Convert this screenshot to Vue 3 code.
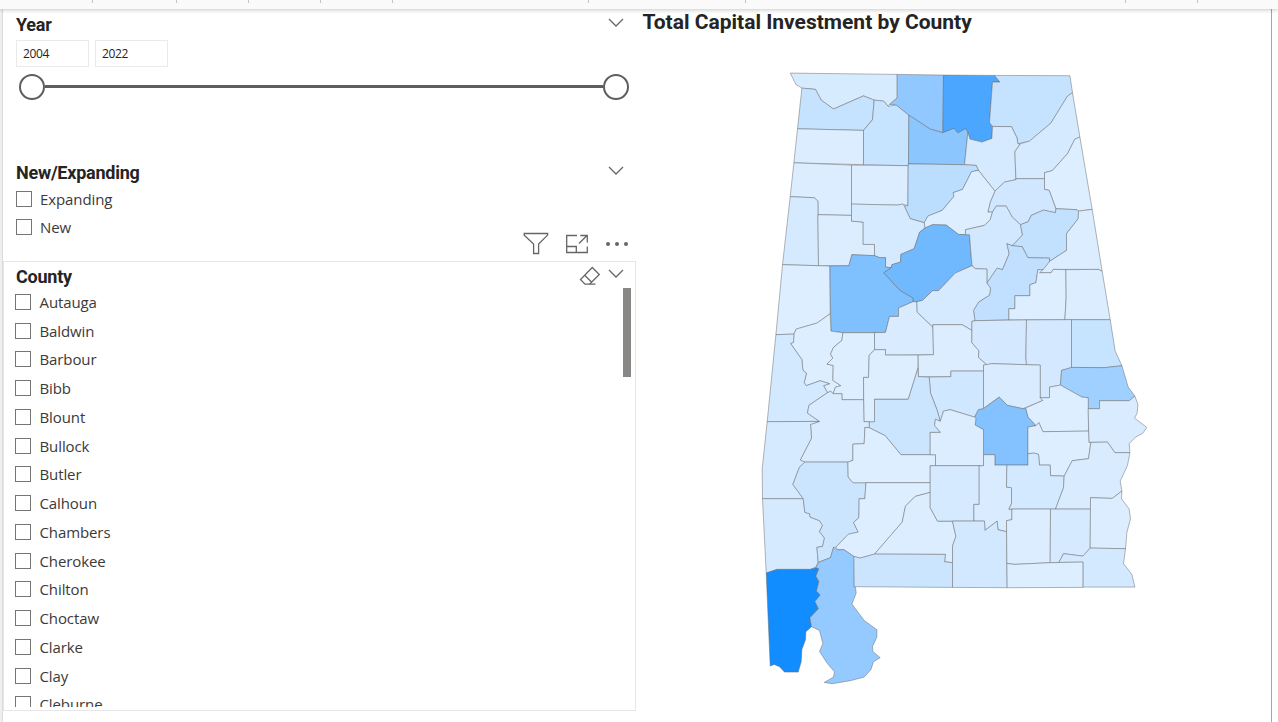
<script setup>
const ticks = [92, 176, 248, 320, 392, 588, 745, 1125, 1197]
const kinds = ['Expanding', 'New']
const names = [
  'Autauga', 'Baldwin', 'Barbour', 'Bibb', 'Blount', 'Bullock', 'Butler', 'Calhoun',
  'Chambers', 'Cherokee', 'Chilton', 'Choctaw', 'Clarke', 'Clay', 'Cleburne',
]
const counties = [
  { n: 'Lauderdale', f: '#d7ebff', p: '790,72.7 897,74 897,97.5 889.5,104 888,106 883.5,100.7 874,99.7 863.3,95.5 833.3,108.6 821,99.7 815.3,89 801.7,87.7 795.7,84' },
  { n: 'Colbert', f: '#c5e2ff', p: '801.7,87.7 815.3,89 821,99.7 833.3,108.6 863.3,95.5 874,99.7 872.3,119.3 863.3,130 797.3,128.4' },
  { n: 'Franklin', f: '#dbedff', p: '797.3,128.4 863.3,130 863.3,164.3 793.7,162.4' },
  { n: 'Lawrence', f: '#c6e3ff', p: '874,99.7 883.5,100.7 888,106 896,104.5 908.7,114.7 908.3,165.3 863.3,164.3 863.3,130 872.3,119.3' },
  { n: 'Limestone', f: '#91c8ff', p: '897,74 943.3,74.7 942.7,132.3 930,128.7 908.7,114.7 896,104.5 889.5,104 897,97.5' },
  { n: 'Madison', f: '#4ba6ff', p: '943.3,74.7 994.3,75 999.7,81.7 992.3,81.7 989.3,122 992.3,126 991.7,138 981.7,141.7 969.7,138.7 967.7,131.7 965,128.3 957.7,132.7 953.7,128 942.7,132.3' },
  { n: 'Jackson', f: '#c5e3ff', p: '994.3,75 1069.7,75.3 1072.3,92.3 1067.3,95.7 1050.7,122.7 1029.3,140.7 1017.7,143.3 1016.7,137.3 1011.3,126.3 992.3,126 989.3,122 992.3,81.7 999.7,81.7' },
  { n: 'Morgan', f: '#8bc6ff', p: '908.7,114.7 930,128.7 942.7,132.3 953.7,128 957.7,132.7 965,128.3 967.7,131.7 964.3,164.3 908.3,163.5' },
  { n: 'Marshall', f: '#d5eaff', p: '967.7,131.7 969.7,138.7 981.7,141.7 991.7,138 992.3,126 1011.3,126.3 1016.7,137.3 1017.7,143.3 1020,143.5 1014.7,151.3 1015.7,179.3 1004.3,181.7 994.7,190.7 978.3,170 976,165 964.3,164.3' },
  { n: 'DeKalb', f: '#d5eaff', p: '1072.3,92.3 1079.7,136.7 1074.7,138.7 1067.3,153.3 1052,170.3 1044.3,172.3 1044.3,178.3 1015.7,178.3 1014.7,151.3 1020,143.5 1029.3,140.7 1050.7,122.7 1067.3,95.7' },
  { n: 'Cherokee', f: '#dceeff', p: '1079.7,136.7 1092,209 1078.3,210.7 1076.7,209.3 1055.7,208.3 1049,190 1044.3,189 1044.3,172.3 1052,170.3 1067.3,153.3 1074.7,138.7' },
  { n: 'Etowah', f: '#d0e7ff', p: '1015.7,178.3 1044.3,178.3 1044.3,189 1049,190 1055.7,208.3 1055.3,212.3 1043.3,209.7 1031,215 1028,221.3 1020.3,224.3 1012,216.7 1006,205.7 996,205.7 992.3,211.7 987.7,211.7 990,201.7 994.7,190.7 1004.3,181.7 1015.7,179.3' },
  { n: 'Marion', f: '#dbedff', p: '793.7,162.4 851.3,164.7 851.3,215 817.7,214.3 817.7,200.7 814,197.3 790,196.3' },
  { n: 'Lamar', f: '#d5eaff', p: '790,196.3 814,197.3 817.7,200.7 818.3,265.3 782.3,264.3' },
  { n: 'Winston', f: '#dbedff', p: '851.3,164.7 908,165.3 907.7,205.3 902.3,203.7 897.3,204.7 851.3,203.7' },
  { n: 'Cullman', f: '#bbdeff', p: '908,163.5 964.3,164.3 976,165 978.3,170 971.3,171.3 962.3,189 953,192.3 953.7,196 942,210 927.7,215.7 924,222.3 910,218.3 904,205.3 907.7,205.3' },
  { n: 'Blount', f: '#dceeff', p: '978.3,170 994.7,190.7 990,201.7 987.7,211.7 992.3,211.7 990,219.3 984.3,225 965.3,229.3 965.3,234.3 958.3,234 946,224.7 932.3,224.3 924.7,227.7 924,222.3 927.7,215.7 942,210 953.7,196 953,192.3 962.3,189 971.3,171.3' },
  { n: 'Fayette', f: '#dbedff', p: '817.7,214.3 851.3,215 851.3,220.7 863,221.7 863,244 874.3,244 874.3,255.3 851.7,254.3 848.7,265.3 818.3,265.3' },
  { n: 'Walker', f: '#d6eaff', p: '851.3,203.7 897.3,204.7 902.3,203.7 904,205.3 910,218.3 924,222.3 924.7,227.7 919.5,231.7 914,248.3 900.7,254 900.3,261.7 891.7,264.3 891,267.3 885.3,266.7 885.3,257.3 879.7,257.3 874.3,255.3 874.3,244 863,244 863,221.7 851.3,220.7' },
  { n: 'Jefferson', f: '#71b9ff', p: '924.7,227.7 919.5,231.7 914,248.3 900.7,254 900.3,261.7 891.7,264.3 891,267.3 883.3,272.3 900,290.3 912.7,297.7 912.7,301.3 916.7,301.3 922.3,300 932.3,290.3 938.3,290.3 955,272.7 971.7,265.3 969.3,234.3 958.3,234 946,224.7 932.3,224.3' },
  { n: 'St. Clair', f: '#d2e8ff', p: '965.3,229.3 984.3,225 990,219.3 992.3,211.7 996,205.7 1006,205.7 1012,216.7 1020.3,224.3 1022.3,234.7 1012,245.3 1006.7,243.3 1009,253.3 1002.3,269.3 997,267.7 986.7,282.7 986.7,268.7 975,268.3 971.7,264.3 969.3,234.3 965.3,234.3' },
  { n: 'Calhoun', f: '#c2e1ff', p: '1020.3,224.3 1028,221.3 1031,215 1043.3,209.7 1055.3,212.3 1055.7,208.3 1076.7,209.3 1078.3,210.7 1078,218.3 1066.3,233.3 1066.3,250 1049.3,261 1049.3,257.7 1027.7,257.3 1022,246.3 1012,245.3 1022.3,234.7' },
  { n: 'Cleburne', f: '#dbedff', p: '1078.3,210.7 1092,209 1102,271 1098.3,269 1053,269 1051,272.3 1039.3,272.3 1049.3,261 1066.3,250 1066.3,233.3 1078,218.3' },
  { n: 'Talladega', f: '#c1e0ff', p: '1022,246.3 1027.7,257.3 1049.3,257.7 1049.3,261 1043,269.2 1037.7,269.3 1035.7,282.3 1029.7,284.3 1029.7,295.3 1014.7,295.3 1014.7,308.3 1008.7,308.3 1008.7,319.5 974.7,320.3 973.3,310 978.3,301.7 989.3,294.7 990.3,287.7 986.7,282.7 997,267.7 1002.3,269.3 1009,253.3 1006.7,243.3 1012,245.3' },
  { n: 'Clay', f: '#dceeff', p: '1037.7,269.3 1043,269.2 1039.3,272.3 1051,272.3 1053,269 1065.7,269.3 1066,296.7 1064.7,319.3 1008.7,319.5 1008.7,308.3 1014.7,308.3 1014.7,295.3 1029.7,295.3 1029.7,284.3 1035.7,282.3' },
  { n: 'Randolph', f: '#dbedff', p: '1065.7,269.3 1098.3,269 1102,271 1110,319.3 1064.7,319.3 1066,296.7' },
  { n: 'Pickens', f: '#dceeff', p: '782.3,264.3 818.3,265.3 829.7,265.6 830,313.3 816.7,322.7 796,328.7 793.7,333.7 775.7,334.3' },
  { n: 'Tuscaloosa', f: '#7fc0ff', p: '829.7,265.6 848.7,265.3 851.7,254.3 874.3,255.3 879.7,257.3 885.3,257.3 885.3,266.7 891,267.3 883.3,272.3 900,290.3 912.7,297.7 912.7,301.3 898.3,307.7 898.3,316 889.3,316 885.3,332 842.7,332.3 830.7,330.7' },
  { n: 'Greene', f: '#dceeff', p: '830,313.3 830.7,330.7 842.7,332.3 841.7,340 833.3,347 830.3,353.7 832.7,357.7 826.7,363.7 833,365 832.7,380 840.7,385.3 835.3,386.7 833,393.3 830.5,391 827.3,392.3 823.3,385.3 829.3,383.3 820,380.3 806,385.3 804,382.3 806.3,372.7 802.7,370 801.7,359.3 790.3,343 793.3,342 793.7,333.7 796,328.7 816.7,322.7' },
  { n: 'Sumter', f: '#d3e9ff', p: '775.7,334.3 793.7,333.7 793.3,342 790.3,343 801.7,359.3 802.7,370 806.3,372.7 804,382.3 806,385.3 820,380.3 829.3,383.3 823.3,385.3 827.3,392.3 808.7,405 807.3,412.7 819.3,421 767,421.3' },
  { n: 'Hale', f: '#dceeff', p: '842.7,332.3 874.3,332.3 874.3,349.3 869,355 868.3,377 863.3,377 863.3,399.3 841.7,399.3 841.7,393.3 833,393.3 835.3,386.7 840.7,385.3 832.7,380 833,365 826.7,363.7 832.7,357.7 830.3,353.7 833.3,347 841.7,340' },
  { n: 'Bibb', f: '#d8ebff', p: '885.3,332 889.3,316 898.3,316 898.3,307.7 912.7,301.3 916.7,301.3 917,311.7 932.7,326.7 933.3,354.3 885.3,354.7 885.3,349.3 874.3,349.3 874.3,332.3' },
  { n: 'Shelby', f: '#d6eaff', p: '971.7,265.3 975,268.3 986.7,268.7 986.7,282.7 990.3,287.7 989.3,294.7 978.3,301.7 973.3,310 974.7,320.3 971.7,321 971.7,330 962,324.3 932.7,324.3 932.7,326.7 917,311.7 916.7,301.3 922.3,300 932.3,290.3 938.3,290.3 955,272.7' },
  { n: 'Chilton', f: '#dbedff', p: '932.7,326.7 932.7,324.3 962,324.3 971.7,330 971.7,342.3 978.7,350.3 978.3,357 987,364.7 983.3,364.7 983.3,370.7 950.7,370.7 950.7,376.3 918.3,376.3 917.7,354.7 933.3,354.3' },
  { n: 'Coosa', f: '#d4e9ff', p: '974.7,320.3 1026.3,319.5 1025.7,356.7 1026.3,364.3 991.3,363.3 987,364.7 978.3,357 978.7,350.3 971.7,342.3 971.7,321' },
  { n: 'Tallapoosa', f: '#d4e9ff', p: '1026.3,319.5 1071.3,319.3 1071.3,367.3 1061.3,370 1060.3,384.7 1049.3,386.7 1049.3,397.3 1040,397.3 1040,364.7 1026.3,364.3 1025.7,356.7' },
  { n: 'Chambers', f: '#c6e3ff', p: '1071.3,319.3 1110,319.3 1115,350.7 1121.7,365.3 1104.3,367.3 1071.3,367' },
  { n: 'Lee', f: '#a0d0ff', p: '1071.3,367 1104.3,367.3 1121.7,365.3 1128,386.7 1134.7,395.7 1129,400.3 1099.3,400.3 1099.3,408.3 1088,408.3 1088,397.3 1081.7,396.7 1060.3,384.7 1061.3,370' },
  { n: 'Elmore', f: '#d9ecff', p: '983.3,364.7 991.3,363.3 1040,364.7 1040,397.3 1042.7,400 1022.7,408.3 1007.3,405 999,396.7 983.3,408' },
  { n: 'Macon', f: '#dceeff', p: '1049.3,386.7 1060.3,384.7 1081.7,396.7 1088,397.3 1088.3,430.7 1042.7,431.3 1038.7,422.3 1035.7,425.3 1027.7,416.7 1025.3,407.7 1042.7,400 1040,397.3 1049.3,397.3' },
  { n: 'Russell', f: '#d8ebff', p: '1088,408.3 1099.3,408.3 1099.3,400.3 1129,400.3 1134.7,395.7 1137.7,404 1137,412.7 1134.3,417.7 1146.7,427 1142.7,432.7 1135,437 1129,443.3 1129.7,452.3 1114.7,452.3 1107.3,441.7 1088.7,442' },
  { n: 'Montgomery', f: '#83c2ff', p: '999,396.7 1007.3,405 1022.7,408.3 1025.3,407.7 1027.7,416.7 1035.7,425.3 1027.7,426.7 1027.7,464.7 994.7,464.7 994.7,454.3 983.3,454.3 983.3,429.3 975,424.7 975.7,418 974.3,416.7 978,409.3 983.3,408.3' },
  { n: 'Bullock', f: '#dceeff', p: '1035.7,425.3 1038.7,422.3 1042.7,431.3 1088.3,430.7 1088.7,442 1090.7,442 1088.3,458.3 1072,460.3 1064,475.7 1050.3,475.3 1050,464.7 1039.3,464.7 1038.3,454 1034,452.7 1027.7,453.3 1027.7,426.7' },
  { n: 'Autauga', f: '#cfe7ff', p: '950.7,376.3 950.7,370.7 983.3,370.7 983.3,408 978,409.3 974.3,416.7 950,409.3 943.3,410.7 940,421 937,410 930.3,392.7 929,376.7' },
  { n: 'Dallas', f: '#cbe5ff', p: '917.7,367.3 918.3,376.3 929,376.7 930.3,392.7 937,410 940,421 935.3,418.7 934.3,425 940.3,432 930,432 930,454.3 900.7,454.3 885,435.3 869,427.3 869,421.3 874.3,421.3 874.3,398.7 908,398.7' },
  { n: 'Perry', f: '#dceeff', p: '874.3,349.3 885.3,349.3 885.3,354.7 917.7,354.7 917.7,367.3 908,398.7 874.3,398.7 874.3,421.3 863.7,421.3 863.3,377 868.3,377 869,355' },
  { n: 'Marengo', f: '#d9ecff', p: '827.3,392.3 830.5,391 833,393.3 841.7,393.3 841.7,399.3 863.3,399.3 863.7,421.3 869,421.3 869,427.3 864.7,427 864,443.3 852.7,443.7 852.7,460 847.7,461.7 804.7,461.7 800,459.7 811.3,437.7 810.3,424 819.3,421 807.3,412.7 808.7,405' },
  { n: 'Choctaw', f: '#d6eaff', p: '767,421.3 819.3,421 810.3,424 811.3,437.7 800,459.7 804.7,461.7 799.3,466.7 792.7,484 803,498.3 762.3,498.3 762,468.3' },
  { n: 'Washington', f: '#d6eaff', p: '762.3,498.3 803,498.3 804.7,512 809.3,513.3 810,516.7 819.3,520.3 822.3,525 819.3,531.3 824.3,537.7 822.3,546 816.7,547 818,562 815.7,566.7 810,569 776.7,569 766,572.7' },
  { n: 'Clarke', f: '#cbe5ff', p: '804.7,461.7 847.7,461.7 848,476.7 852.7,482.3 865.7,482.3 864.7,498.3 859,498.3 858.7,517.3 853.3,522 858,531.7 848.3,533.7 835.7,546.7 833.3,547 830.3,557.3 818,562 816.7,547 822.3,546 824.3,537.7 819.3,531.3 822.3,525 819.3,520.3 810,516.7 809.3,513.3 804.7,512 803,498.3 792.7,484 799.3,466.7' },
  { n: 'Wilcox', f: '#dceeff', p: '864.7,427 869,427.3 885,435.3 900.7,454.3 935.3,454.3 935.3,465.3 930,465.3 930,482.3 852.7,482.3 848,476.7 847.7,461.7 852.7,460 852.7,443.7 864,443.3' },
  { n: 'Monroe', f: '#dceeff', p: '865.7,482.3 930,482.3 930,492 915,496 905.3,505.7 902,521.7 874.3,553.7 860,557.7 853.3,556 843.7,549.3 837.3,549.3 835.7,546.7 848.3,533.7 858,531.7 853.3,522 858.7,517.3 859,498.3 864.7,498.3' },
  { n: 'Conecuh', f: '#dbedff', p: '930,492 930,507.3 937.3,520.7 952.3,520.7 955.7,536 952.3,545.7 952.3,562.3 944.3,561.3 945.3,554 874.3,553.7 902,521.7 905.3,505.7 915,496' },
  { n: 'Escambia', f: '#cbe5ff', p: '874.3,553.7 945.3,554 944.3,561.3 952.3,562.3 952.3,587 853.7,586.3 853.3,556 860,557.7' },
  { n: 'Lowndes', f: '#dbedff', p: '940,421 943.3,410.7 950,409.3 974.3,416.7 975.7,418 975,424.7 983.3,429.3 983.3,465.3 935.3,465.3 935.3,454.3 930,454.3 930,432 940.3,432 934.3,425 935.3,418.7' },
  { n: 'Butler', f: '#d5eaff', p: '930,465.3 979,465.3 979,504 973.7,504 973.7,520.7 937.3,520.7 930,507.3' },
  { n: 'Crenshaw', f: '#d8ebff', p: '979,465.3 983.3,465.3 983.3,454.3 994.7,454.3 994.7,464.7 1006.7,464.7 1006.3,486.7 1011.3,487.3 1011.3,503.3 1008.7,508.7 1011.7,508.7 1011.7,519.3 1006.3,520.3 1006.3,531.3 997.7,529.3 997,520.7 984.7,530 984.3,520.7 973.7,520.7 973.7,504 979,504' },
  { n: 'Covington', f: '#d2e8ff', p: '952.3,520.7 984.3,520.7 984.7,530 997,520.7 997.7,529.3 1006.3,531.3 1007,587.3 952.3,587 952.3,545.7 955.7,536' },
  { n: 'Pike', f: '#d3e9ff', p: '1006.7,464.7 1027.7,464.7 1027.7,453.3 1034,452.7 1038.3,454 1039.3,464.7 1050,464.7 1050.3,475.3 1064,475.7 1063.3,487.3 1055.3,508.7 1008.7,508.7 1011.3,503.3 1011.3,487.3 1006.3,486.7' },
  { n: 'Barbour', f: '#d9ecff', p: '1090.7,442 1107.3,441.7 1114.7,452.3 1129.7,452.3 1127.3,465 1120,480.7 1121.7,490.7 1112,498 1090.3,497.3 1090.3,508.7 1055.3,508.7 1063.3,487.3 1064,475.7 1072,460.3 1088.3,458.3' },
  { n: 'Coffee', f: '#dbedff', p: '1006.3,520.3 1011.7,519.3 1011.7,508.7 1050.3,508.7 1050,562.3 1014,564 1006.7,563' },
  { n: 'Dale', f: '#d6eaff', p: '1050.3,508.7 1090.3,508.7 1090,547.7 1082.7,555.7 1063.3,553.3 1058.7,562 1050,562.3' },
  { n: 'Henry', f: '#dbedff', p: '1090.3,497.3 1112,498 1121.7,490.7 1121.3,498.3 1129,508.7 1130.3,518.3 1126.7,532 1125.3,548.3 1090,547.7' },
  { n: 'Houston', f: '#d3e9ff', p: '1090,547.7 1125.3,548.3 1123.3,563.3 1131.7,574 1134.7,586.7 1082.7,586.7 1082.7,561.7 1058.7,562 1063.3,553.3 1082.7,555.7' },
  { n: 'Geneva', f: '#dceeff', p: '1006.7,563 1014,564 1050,562.3 1082.7,561.7 1082.7,587 1007,587.3' },
  { n: 'Mobile', f: '#118dff', p: '766,572.7 776.7,569 810,569 815.7,567.3 818.7,568.3 815.7,575.7 818.7,581 816.3,590.7 820,594.7 814.7,601 818.3,608.3 809.7,617.3 811.3,626.3 805.7,631.3 805.3,639.3 801.7,649 801,661.3 798,671.7 784.3,671.7 779.3,666.3 774,664 770,665.7' },
  { n: 'Baldwin', f: '#94caff', p: '818,562 830.3,557.3 833.3,547 837.3,549.3 843.7,549.3 853.7,556 853.7,586.3 855.3,587 856,592.7 851.7,603.7 864,620 876.7,629.3 876.7,636.7 872.3,646 872.7,651 880,657.3 873.3,661.3 870.7,669.3 864,676.7 850,680.3 832,683.3 824,682 833.3,676.7 834.3,671.3 827.3,663.3 819.3,651 822.7,643 819.3,630 811.3,626.3 809.7,617.3 818.3,608.3 814.7,601 820,594.7 816.3,590.7 818.7,581 815.7,575.7 818.7,568.3 815.7,567.3' },
]
</script>

<template>
  <div class="page">
    <div class="topbar">
      <i v-for="t in ticks" :key="t" class="tick" :style="{ left: t + 'px' }"></i>
    </div>
    <div class="body">
      <div class="side">
        <section class="year">
          <header class="head">
            <h2>Year</h2>
            <svg class="chev" width="16" height="10" viewBox="0 0 16 10"><path d="M1 1l7 7 7-7" /></svg>
          </header>
          <div class="fields">
            <span class="field">2004</span>
            <span class="field">2022</span>
          </div>
          <div class="slider"><i class="knob"></i><i class="track"></i><i class="knob"></i></div>
        </section>

        <section class="kind">
          <header class="head">
            <h2>New/Expanding</h2>
            <svg class="chev" width="16" height="10" viewBox="0 0 16 10"><path d="M1 1l7 7 7-7" /></svg>
          </header>
          <label v-for="k in kinds" :key="k" class="row"><i class="box"></i><span>{{ k }}</span></label>
        </section>

        <div class="tools">
          <svg width="26" height="24" viewBox="0 0 26 24"><path d="M1.2 1.5h23.4v1.6l-9 9v9.400h-5v-9.400l-9.400-9z" /></svg>
          <svg width="24" height="20" viewBox="0 0 24 20"><path d="M12 1.500H1.700v17h20.600v-6M1.700 12.500h9.600v6M14 9.500l8-8M15.300 1.500h7v7" /></svg>
          <svg class="dots" width="24" height="6" viewBox="0 0 24 6"><circle cx="3" cy="3" r="2" /><circle cx="12" cy="3" r="2" /><circle cx="21" cy="3" r="2" /></svg>
        </div>

        <section class="county">
          <header class="head">
            <h2>County</h2>
            <span class="acts">
              <svg class="eraser" width="22" height="20" viewBox="0 0 22 20"><path d="M13.300 1.500l7 7L12 16.800l-1.500 1.400H6L1.500 13.500zM5.700 9.200l7 7M5.500 18.200h11" /></svg>
              <svg class="chev" width="16" height="10" viewBox="0 0 16 10"><path d="M1 1l7 7 7-7" /></svg>
            </span>
          </header>
          <div class="list">
            <div class="items">
              <label v-for="c in names" :key="c" class="row"><i class="box"></i><span>{{ c }}</span></label>
            </div>
            <i class="thumb"></i>
          </div>
        </section>
      </div>

      <main class="main">
        <h1>Total Capital Investment by County</h1>
        <svg class="map" width="400" height="640" viewBox="753.8 59.6 400 640">
          <polygon v-for="c in counties" :key="c.n" :points="c.p" :fill="c.f" />
        </svg>
      </main>
    </div>
  </div>
</template>

<style>
html, body { margin: 0; overflow: hidden; background: #fff; }
</style>

<style scoped>
.page { width: 1278px; height: 722px; box-sizing: border-box; display: flex; flex-direction: column; background: #fff; color: #252423; font-family: "Open Sans", "Noto Sans", sans-serif; overflow: hidden; }
.topbar { position: relative; z-index: 1; flex: none; height: 9px; background: #fafafa; box-shadow: 0 1px 4px rgba(0, 0, 0, .22); }
.tick { position: absolute; top: 0; width: 1px; height: 3px; background: #c4c4c4; }
.body { flex: 1; display: flex; min-height: 0; margin-right: 6px; border-left: 2px solid #f0efee; border-right: 1px solid #a6a6a6; }
.side { width: 634px; flex: none; display: flex; flex-direction: column; border-left: 1px solid #dddbd9; box-sizing: border-box; }
h1, h2 { margin: 0; font-family: Roboto, sans-serif; font-weight: 700; color: #252423; white-space: nowrap; }
h2 { font-size: 18px; line-height: 22px; letter-spacing: -.24px; }
h1 { font-size: 21px; line-height: 26px; letter-spacing: 0; }
.head { display: flex; justify-content: space-between; align-items: flex-start; padding: 0 12px 0 13px; }
.chev { margin-top: 4px; }
svg path { fill: none; stroke: #666; stroke-width: 1.3; }
.year { height: 149px; padding-top: 5px; box-sizing: border-box; }
.fields { display: flex; gap: 6px; margin: 4px 0 0 13px; }
.field { width: 73px; height: 27px; box-sizing: border-box; border: 1px solid #eaeaea; padding-left: 6px; font-size: 12px; line-height: 25px; letter-spacing: -.4px; }
.slider { display: flex; align-items: center; margin: 6.6px 7.5px 0 15.5px; }
.knob { width: 26px; height: 26px; box-sizing: border-box; border: 2px solid #605e5c; border-radius: 50%; flex: none; }
.track { height: 3px; flex: 1; background: #605e5c; }
.kind { height: 72px; padding-top: 4px; }
.row { display: flex; align-items: center; height: 28.76px; padding-left: 12px; font-size: 15px; letter-spacing: -.1px; color: #3b3a39; white-space: nowrap; }
.kind .row { padding-left: 13px; height: 28px; }
.kind .head + .row { margin-top: 1px; }
.box { width: 16px; height: 16px; box-sizing: border-box; border: 1px solid #767573; margin-right: 8px; flex: none; }
.tools { height: 27px; display: flex; align-items: center; justify-content: flex-end; gap: 16px; padding: 0 7.5px 8px 0; box-sizing: border-box; }
.county { height: 450px; box-sizing: border-box; border: 1px solid #e6e6e6; display: flex; flex-direction: column; padding-bottom: 3px; padding-top: 4px; }
.dots circle { fill: #666; }
.county .head { padding: 0 11px 0 12px; }
.acts { display: flex; gap: 7px; align-items: flex-start; }
.acts .chev { margin-top: 3px; }
.list { flex: 1; min-height: 0; overflow: hidden; display: flex; justify-content: space-between; padding-right: 4px; }
.items { margin-top: -.4px; }
.county .row { padding-left: 11px; }
.county .box { margin-right: 8.5px; }
.thumb { width: 8px; height: 89px; background: #888785; }
.main { flex: 1; }
.main h1 { padding-left: 6.5px; }
.map { display: block; margin: 25px 0 0 118px; }
.map polygon { stroke: #666; stroke-opacity: .6; stroke-width: .8; stroke-linejoin: round; }
</style>
